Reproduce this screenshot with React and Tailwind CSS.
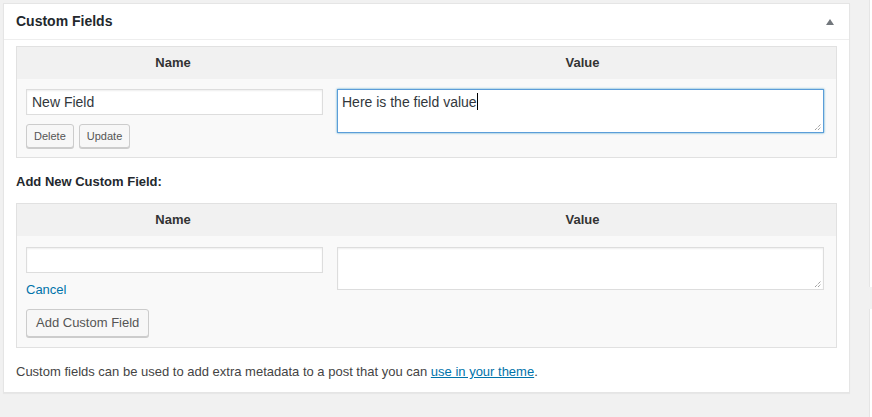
import React from 'react';

const font = { fontFamily: '"Segoe UI", "Liberation Sans", Arial, sans-serif' };

function Grip() {
  return (
    <svg className="absolute right-[2px] bottom-[2px]" width="7" height="7" viewBox="0 0 7 7">
      <path d="M1 7L7 1M4 7L7 4" stroke="#777" strokeWidth="1" strokeDasharray="1 1" />
    </svg>
  );
}

function SmallButton({ children }) {
  return (
    <button className="h-[24px] px-[7px] text-[11px] text-[#555] bg-[#f7f7f7] border border-[#ccc] rounded-[3px] shadow-[0_1px_0_#ccc] leading-[22px]">
      {children}
    </button>
  );
}

function TableHead() {
  return (
    <div className="flex h-[32px] bg-[#f1f1f1] text-[13px] font-bold text-[#333] items-center">
      <div className="w-[312px] text-center">Name</div>
      <div className="flex-1 text-center">Value</div>
    </div>
  );
}

export default function App() {
  return (
    <div className="w-[872px] h-[417px] bg-[#f1f1f1] flex overflow-hidden" style={font}>
      <div className="ml-[3px] mt-[3px] w-[847px] h-[390px] bg-white border border-[#e5e5e5] shadow-[0_1px_1px_rgba(0,0,0,0.04)] flex flex-col">
        <div className="h-[36px] border-b border-[#eee] px-[12px] flex items-center justify-between">
          <h2 className="text-[14px] font-semibold text-[#23282d]">Custom Fields</h2>
          <svg width="8" height="6" viewBox="0 0 8 6" className="mr-[3px] mt-[1px]">
            <polygon points="4,0 8,6 0,6" fill="#72777c" />
          </svg>
        </div>

        <div className="px-[12px] pt-[6px] text-[#444]">
          <div className="border border-[#e1e1e1]">
            <TableHead />
            <div className="flex bg-[#f9f9f9] pt-[10px] pb-[9px]">
              <div className="w-[312px] pl-[9px]">
                <div className="w-[297px] h-[26px] bg-white border border-[#ddd] shadow-[inset_0_1px_2px_rgba(0,0,0,0.07)] px-[5px] text-[14px] text-[#32373c] leading-[24px]">
                  New Field
                </div>
                <div className="flex gap-[5px] mt-[9px]">
                  <SmallButton>Delete</SmallButton>
                  <SmallButton>Update</SmallButton>
                </div>
              </div>
              <div className="flex-1 pl-[8px] pr-[12px]">
                <div className="relative h-[44px] bg-white border border-[#5b9dd9] shadow-[0_0_2px_rgba(30,140,190,0.8)] px-[4px] pt-[1px] text-[14px] text-[#32373c] leading-[22px]">
                  Here is the field value
                  <span className="inline-block w-[1px] h-[17px] bg-black align-[-3px]" />
                  <Grip />
                </div>
              </div>
            </div>
          </div>

          <p className="pt-[15px] pb-[13px] text-[13px] font-semibold leading-[17px] text-[#23282d]">
            Add New Custom Field:
          </p>

          <div className="border border-[#e1e1e1]">
            <TableHead />
            <div className="flex bg-[#f9f9f9] pt-[11px] pb-[10px]">
              <div className="w-[312px] pl-[9px]">
                <div className="w-[297px] h-[26px] bg-white border border-[#ddd] shadow-[inset_0_1px_2px_rgba(0,0,0,0.07)]" />
                <div className="mt-[7px] text-[13px] leading-[20px] text-[#0073aa]">Cancel</div>
                <button className="mt-[9px] h-[28px] px-[9px] text-[13px] text-[#555] bg-[#f7f7f7] border border-[#ccc] rounded-[3px] shadow-[0_1px_0_#ccc] leading-[26px]">
                  Add Custom Field
                </button>
              </div>
              <div className="flex-1 pl-[8px] pr-[12px]">
                <div className="relative h-[43px] bg-white border border-[#ddd] shadow-[inset_0_1px_2px_rgba(0,0,0,0.07)]">
                  <Grip />
                </div>
              </div>
            </div>
          </div>

          <p className="mt-[14px] text-[13px] leading-[19px] text-[#444]">
            Custom fields can be used to add extra metadata to a post that you can{' '}
            <a className="text-[#0073aa] underline">use in your theme</a>.
          </p>
        </div>
      </div>

      <div className="ml-[19px] w-[3px] flex flex-col">
        <div className="h-[287px] bg-white border-l border-[#e5e5e5]" />
        <div className="mt-[22px] flex-1 bg-white border-l border-[#e5e5e5]" />
      </div>
    </div>
  );
}
